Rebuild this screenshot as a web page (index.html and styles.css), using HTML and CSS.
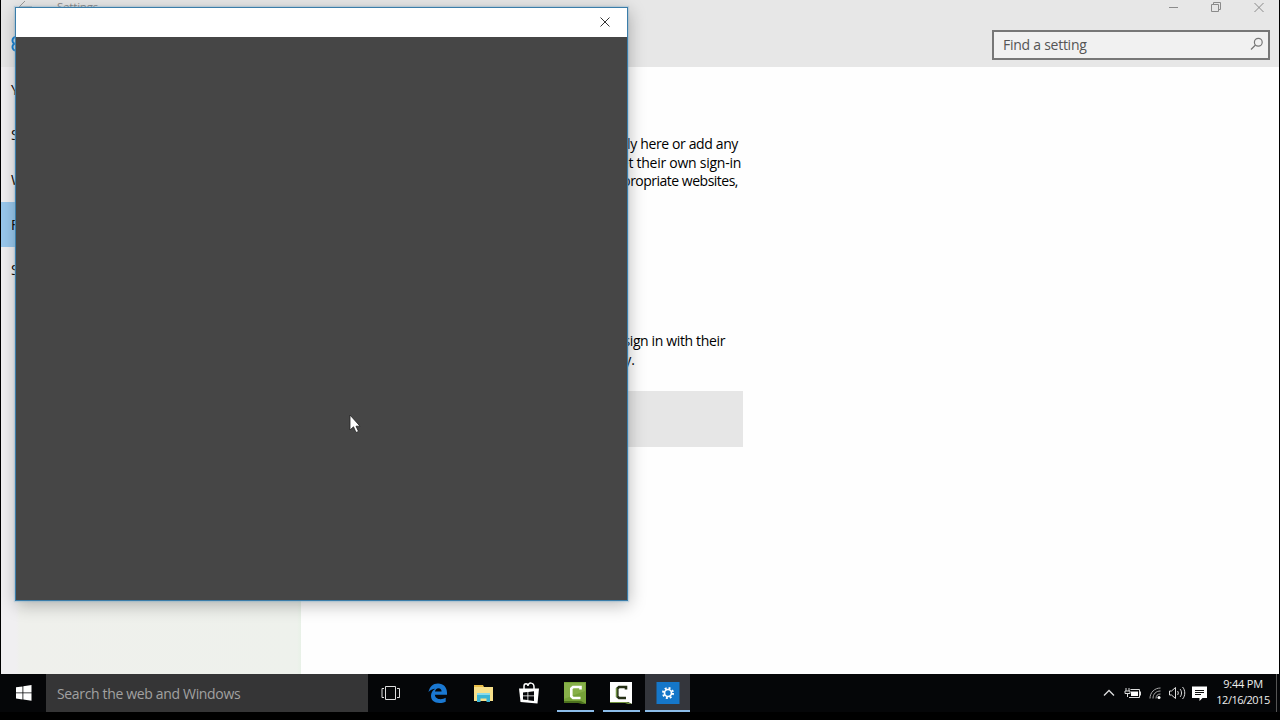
FILE: index.html
```html
<!DOCTYPE html>
<html lang="en">
<head>
<meta charset="utf-8">
<title>Settings</title>
<link rel="stylesheet" href="styles.css">
</head>
<body>
<div class="screen">
  <main class="window">
    <header class="header">
      <div class="titlebar">
        <svg class="back" width="16" height="14" viewBox="0 0 16 14"><path d="M15 7H2M8 1L2 7l6 6"/></svg>
        <span class="app-title">Settings</span>
        <svg class="caption" width="100" height="14" viewBox="0 0 100 14"><path d="M4 7.5h9M46.5 4.500h7v7h-7zM48.500 4.500v-2h7v7h-2M89.500 3l9 9M98.500 3l-9 9"/></svg>
      </div>
      <div class="toolbar">
        <svg class="gear" width="20" height="20" viewBox="0 0 20 20"><circle cx="7" cy="5.500" r="3.500"/><circle cx="7" cy="12" r="3.500"/></svg>
        <div class="find"><span>Find a setting</span>
          <svg width="14" height="14" viewBox="0 0 14 14"><circle cx="8.300" cy="5.200" r="3.900"/><path d="M5.500 8L1 12.500"/></svg>
        </div>
      </div>
    </header>
    <div class="body">
      <nav class="nav"><div>Y</div><div>S</div><div>W</div><div class="active">F</div><div>S</div></nav>
      <section class="content">
        <div class="para family"><p class="l1">ly here or add any</p><p class="l2">et their own sign-in</p><p class="l3">propriate websites,</p></div>
        <div class="para other"><p class="l4">sign in with their</p><p class="l5">y.</p></div>
        <div class="add"></div>
      </section>
    </div>
  </main>
  <footer class="taskbar">
    <div class="start"><svg width="16" height="16" viewBox="0 0 16 16"><path d="M0 2.300l6.500-.9v6.100H0zM7.300 1.300L15.500 0v7.500H7.300zM0 8.300h6.500v6.100L0 13.500zM7.300 8.300h8.200v7.500l-8.200-1.200z"/></svg></div>
    <div class="search">Search the web and Windows</div>
    <div class="task"><svg width="20" height="14" viewBox="0 0 20 14" class="line"><path d="M4.500.5h10v13h-10zM3 2.500H1v9h2M16 2.500h2.500v9H16"/></svg></div>
    <div class="task edge"><svg width="20" height="20" viewBox="0 0 20 20"><path fill="#1a78d2" d="M.5 9C1.500 3.500 5 .4 10 .4c5.500 0 9 3.900 9 9.300v2.100H6.900c.2 3.100 2.600 4.400 5.600 4.400 2 0 3.800-.6 5.200-1.400v3.900c-1.600.8-3.700 1.300-6.200 1.300C6 20 3 17 3 12.800c0-3 1.500-5.600 4.300-7.100C4.600 6 2 7 .5 9zM7 8.500h6.600c0-2-1.100-3.300-3.100-3.300S7.300 6.500 7 8.500z"/></svg></div>
    <div class="task"><svg width="21" height="18" viewBox="0 0 21 18"><path fill="#e8bd48" d="M1 1h9l1 2h9v14H1z"/><path fill="#f7e08a" d="M1 3h19v14H1z"/><path fill="#3bb5d5" d="M4 9h13v9h-3.500v-3.500h-6V18H4z"/><path fill="#8bdbea" d="M4 9h13v2H4z"/></svg></div>
    <div class="task"><svg width="22" height="22" viewBox="0 0 22 22"><path fill="none" stroke="#fff" stroke-width="1.500" d="M6 7V4c0-3 4-3 4 0 0-4 6-4 6 1v2"/><path fill="#fff" d="M1 6.500h20L19.500 21.500 2.500 20z"/><path fill="#050608" d="M5 10.500l4.500-.5v3.500H5zM10.300 9.900l5.700-.7v4.300h-5.700zM5 14.300h4.500v3.800L5 17.500zM10.300 14.300H16v4.600l-5.700-.7z"/></svg></div>
    <div class="task running"><svg width="24" height="24" viewBox="0 0 24 24"><path fill="#76a238" d="M1 1h22v22l-5-2H1z"/><path fill="#97be59" d="M1 2h21v8L1 18z" opacity=".5"/><path fill="#4c711e" d="M1 20h17l5 3h-4l-4-1H1z"/><path fill="none" stroke="#fff" stroke-width="2.600" d="M17.500 8.500V6H10L8.300 7.500v8L10 17h7.500"/></svg></div>
    <div class="task running"><svg width="24" height="24" viewBox="0 0 24 24"><path fill="#fff" d="M1 1h22v22l-4-2H1z"/><path fill="#74953f" d="M1 21h17l5 2h-4l-3-1H1z"/><path fill="none" stroke="#263016" stroke-width="2.600" d="M17 8.500V6h-7L8.300 7.500v8L10 17h7"/><path stroke="#709345" stroke-width="1.500" d="M7.500 7v9"/></svg></div>
    <div class="task running current"><svg width="24" height="24" viewBox="0 0 24 24"><path fill="#1577c9" d="M.5 1h23v22H.5z"/><g fill="none" stroke="#fff"><circle cx="12" cy="12" r="3.500" stroke-width="1.700"/><circle cx="12" cy="12" r="5" stroke-width="2" stroke-dasharray="1.960 1.967"/></g></svg></div>
    <div class="tray">
      <svg class="line tray-icons" width="106" height="20" viewBox="0 0 106 20">
        <path stroke-width="1.300" d="M1 12.500l5-5 5 5"/>
        <path d="M23 5v3M26 5v3M22 8h5v2.500h-5zM24.500 11v3M27.500 6.500h9v8H26M37.500 8.500v4"/><path fill="#fff" stroke="none" d="M28 8.500h7v4.500h-7z"/>
        <g stroke="#aaa"><path d="M47 15.500C47 9.500 51.500 5 57.500 5M50 15.500c0-4.500 3-7.500 7.500-7.500M53 15.500c0-3 1.500-4.500 4.500-4.500"/></g><circle cx="56" cy="14.500" r="1.500" fill="#fff" stroke="none"/>
        <path d="M66.500 8h2l4-3.500v11l-4-3.500h-2zM74.500 8c1 1 1 3 0 4M77 6c2 2 2 6 0 8M79.500 4c3 3 3 9 0 12"/>
        <path fill="#fff" stroke="none" d="M89 3.500h15V15h-4.500l-3 3v-3H89z"/><path stroke="#111" d="M92 7.500h9M92 9.500h9M92 11.500h6"/>
      </svg>
      <div class="clock"><div class="time">9:44 PM</div><div class="date">12/16/2015</div></div>
      <div class="peek"></div>
    </div>
  </footer>
  <div class="dialog"><div class="dialog-bar"><svg width="10" height="10" viewBox="0 0 10 10"><path d="M.5.5l9 9M9.500.5l-9 9"/></svg></div></div>
  <svg class="cursor" width="12" height="20" viewBox="0 0 12 20"><path d="M1 1v15l3.500-3.200L7 18.500l2.500-1.100-2.500-5.200H11z" fill="#fff" stroke="#222" stroke-width=".8"/></svg>
</div>
</body>
</html>
```
FILE: styles.css
```css
* { box-sizing: border-box; }
body { margin: 0; background: #000; font-family: "Open Sans", "Noto Sans", sans-serif; }
p { margin: 0; }
svg { display: block; flex: none; }
.screen { position: relative; width: 1280px; height: 720px; overflow: hidden; display: flex; flex-direction: column; background: #000; }
.window { height: 674px; margin: 0 1px; display: flex; flex-direction: column; background: #fefefe; }
.header { height: 67px; background: #e7e7e7; }
.titlebar { height: 14px; display: flex; align-items: center; }
.back { margin-left: 16px; fill: none; stroke: #999; }
.app-title { margin-left: 24px; font-size: 11.500px; line-height: 14px; letter-spacing: -.2px; color: #888; }
.caption { margin-left: auto; margin-right: 14px; fill: none; stroke: #8b8b8b; }
.toolbar { display: flex; justify-content: space-between; padding: 16px 9px 0 8px; }
.gear { margin-top: 5px; fill: none; stroke: #1681d4; stroke-width: 2; }
.find { width: 278px; height: 30px; display: flex; justify-content: space-between; align-items: center; padding: 0 4px 2px 9px; background: #f1f1f1; border: 2px solid #777; font-size: 14px; letter-spacing: -.26px; color: #555; }
.find svg { fill: none; stroke: #777; stroke-width: 1.200; }
.body { flex: 1; display: flex; }
.nav { width: 300px; background: linear-gradient(90deg, #f0eff1 15px, #eff0ec 19px, #eef1ec 296px, #e8f1e7); font-size: 14px; color: #000; }
.nav div { height: 45px; padding-left: 10px; line-height: 46px; }
.nav .active { background: #99c8ed; }
.content { width: 442px; padding-top: 68px; }
.para { font-size: 14px; line-height: 18.700px; color: #000; text-align: right; white-space: nowrap; }
.l1, .l3 { padding-right: 5px; }
.l1 { letter-spacing: -.37px; }
.l2 { padding-right: 2px; letter-spacing: -.26px; }
.l3 { letter-spacing: -.5px; }
.l4 { padding-right: 18px; letter-spacing: -.36px; }
.l5 { padding-right: 108px; }
.other { margin-top: 141px; }
.add { height: 56px; margin-top: 21px; background: #e6e6e6; }
.taskbar { height: 38px; display: flex; padding-left: 1px; background: #050608; }
.start { width: 45px; display: flex; align-items: center; justify-content: center; fill: #fff; }
.search { width: 322px; background: #353536; padding-left: 11px; font-size: 14px; line-height: 39px; letter-spacing: -.34px; color: #a1a1a1; }
.task { width: 46px; display: flex; align-items: center; justify-content: center; }
.edge { padding-left: 2px; }
.line { fill: none; stroke: #ddd; }
.running { background: linear-gradient(#8bbbe7, #8bbbe7) center bottom / 37px 2px no-repeat; }
.current { margin-left: 1px; width: 45px; background: linear-gradient(#8bbbe7, #8bbbe7) center bottom / 100% 2px no-repeat #34363c; }
.tray { margin-left: auto; display: flex; align-items: center; }
.tray-icons { margin-right: -1px; }
.clock { width: 56px; margin-left: 7px; margin-top: -2px; font-size: 11px; line-height: 16px; color: #eee; text-align: center; white-space: nowrap; }
.date { letter-spacing: -.5px; }
.time { letter-spacing: -.2px; }
.peek { width: 1px; height: 38px; margin: 0 3px 0 5px; background: #555; }
.dialog { position: absolute; left: 15px; top: 7px; width: 613px; height: 594px; background: #464646; border: 1px solid #3b7da9; box-shadow: 0 0 1px 1px rgba(126,174,206,.35), 1px 4px 16px rgba(0,0,0,.27); }
.dialog-bar { height: 29px; background: #fff; display: flex; justify-content: flex-end; align-items: center; padding: 0 17px 2px 0; fill: none; stroke: #333; }
.cursor { position: absolute; left: 349px; top: 414px; }
```
